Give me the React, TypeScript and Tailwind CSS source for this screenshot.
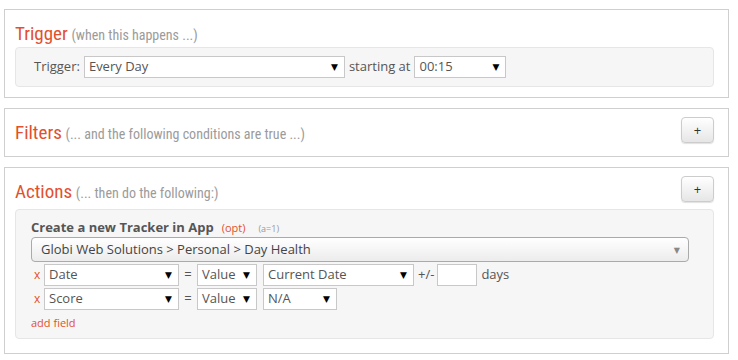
import React from "react";

const body = { fontFamily: '"Open Sans", "DejaVu Sans", sans-serif' };
const cond = { fontFamily: '"Liberation Sans Narrow", "Roboto Condensed", Roboto, sans-serif' };

function Select({ value, className }: { value: string; className: string }) {
  return (
    <div className={`flex items-center justify-between h-[22px] border border-[#c8c8c8] bg-white pl-[4px] pr-[6px] text-[13px] text-[#555] ${className}`}>
      <span>{value}</span>
      <span className="text-[9px] text-black">▼</span>
    </div>
  );
}

function PlusButton() {
  return (
    <button className="w-[33px] h-[26px] rounded-[4px] border border-[#ccc] bg-gradient-to-b from-white to-[#e6e6e6] shadow-[0_1px_1px_rgba(0,0,0,0.12)] text-[13px] text-[#333] leading-none">
      +
    </button>
  );
}

function Header({ title, sub, button }: { title: string; sub: string; button?: boolean }) {
  return (
    <div className="flex justify-between items-start">
      <div className="mt-[4px] h-[24px] leading-[24px] whitespace-nowrap" style={cond}>
        <span className="text-[19px] text-[#e2502e]">{title}</span>{" "}
        <span className="text-[14px] text-[#9b9b9b]">{sub}</span>
      </div>
      {button && <PlusButton />}
    </div>
  );
}

function FieldRow({ field, third, extra }: { field: string; third: string; extra?: boolean }) {
  return (
    <div className="flex items-center h-[22px] text-[13px] text-[#555]">
      <span className="w-[13px] pl-[3px] text-[12px] text-[#e2502e]">x</span>
      <Select value={field} className="w-[135px]" />
      <span className="w-[18px] text-center">=</span>
      <Select value="Value" className="w-[60px]" />
      <div className="w-[6px]" />
      <Select value={third} className={extra ? "w-[151px]" : "w-[74px]"} />
      {extra && (
        <>
          <span className="ml-[4px]">+/-</span>
          <div className="ml-[3px] w-[40px] h-[22px] border border-[#c8c8c8] bg-white" />
          <span className="ml-[4px]">days</span>
        </>
      )}
    </div>
  );
}

export default function App() {
  return (
    <div className="bg-white w-[738px] h-[360px] pt-[9px] pl-[4px]" style={body}>
      <div className="w-[725px] flex flex-col gap-[10px]">
        {/* Trigger */}
        <div className="border border-[#cfcfcf] pl-[10px] pr-[14px] pt-[8px] pb-[10px]">
          <Header title="Trigger" sub="(when this happens ...)" />
          <div className="mt-[1px] border border-[#e6e6e6] bg-[#f6f6f6] rounded-[4px] pl-[18px] py-[8px] flex items-center text-[13px] text-[#555]">
            <span>Trigger:</span>
            <Select value="Every Day" className="ml-[4px] w-[261px]" />
            <span className="ml-[4px]">starting at</span>
            <Select value="00:15" className="ml-[4px] w-[92px]" />
          </div>
        </div>

        {/* Filters */}
        <div className="border border-[#cfcfcf] pl-[10px] pr-[14px] pt-[8px] pb-[11px]">
          <Header title="Filters" sub="(... and the following conditions are true ...)" button />
        </div>

        {/* Actions */}
        <div className="border border-[#cfcfcf] pl-[10px] pr-[14px] pt-[8px] pb-[14px]">
          <Header title="Actions" sub="(... then do the following:)" button />
          <div className="mt-[5px] border border-[#e6e6e6] bg-[#f6f6f6] rounded-[4px] pl-[15px] pr-[24px] pt-[8px] pb-[7px]">
            <div className="h-[18px] leading-[18px] flex items-baseline whitespace-nowrap">
              <span className="text-[13px] font-bold text-[#555]">Create a new Tracker in App</span>
              <span className="ml-[8px] text-[11px] text-[#e2502e]">(opt)</span>
              <span className="ml-[13px] text-[9px] text-[#999]">(a=1)</span>
            </div>
            <div className="mt-[1px] h-[25px] rounded-[4px] border border-[#aaa] bg-gradient-to-b from-white to-[#ececec] flex items-center justify-between pl-[9px] pr-[8px] text-[13px] text-[#444]">
              <span>Globi Web Solutions &gt; Personal &gt; Day Health</span>
              <span className="text-[8px] text-[#888]">▼</span>
            </div>
            <div className="mt-[2px] flex flex-col gap-[2px]">
              <FieldRow field="Date" third="Current Date" extra />
              <FieldRow field="Score" third="N/A" />
            </div>
            <div className="mt-[5px] h-[16px] leading-[16px] text-[11px] text-[#e2502e]">add field</div>
          </div>
        </div>
      </div>
    </div>
  );
}
